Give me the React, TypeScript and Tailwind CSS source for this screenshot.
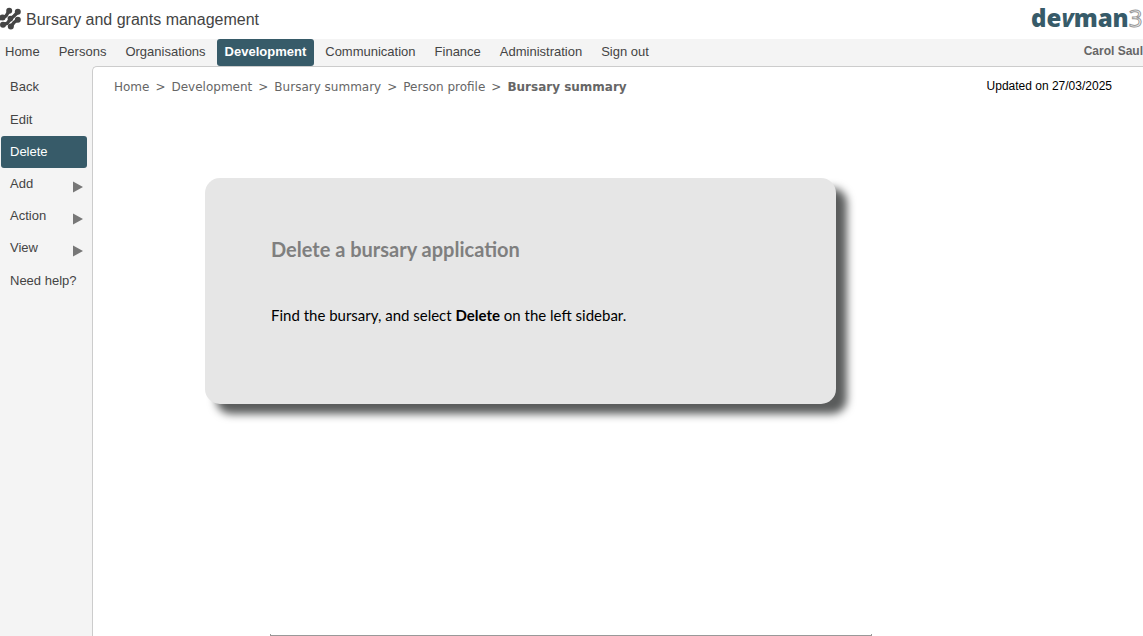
const navItems = [
  'Home',
  'Persons',
  'Organisations',
  'Development',
  'Communication',
  'Finance',
  'Administration',
  'Sign out',
];

const sideItems = [
  { label: 'Back' },
  { label: 'Edit' },
  { label: 'Delete', active: true },
  { label: 'Add', menu: true },
  { label: 'Action', menu: true },
  { label: 'View', menu: true },
  { label: 'Need help?' },
];

const crumbs = ['Home', 'Development', 'Bursary summary', 'Person profile'];

function BrandMark() {
  return (
    <svg width="22" height="24" viewBox="0 0 22 24" aria-hidden="true" className="-mt-1 shrink-0">
      <g stroke="#444" strokeWidth="3.4" fill="none">
        <path d="M-1 13 L3 11.5 L6 10 L9 5" />
        <path d="M3 18.5 L7 17.5 L11 12.5 L14 10 L18 6" />
        <path d="M11 20.5 L14 16.5 L18 13.5" />
      </g>
      <g fill="#444">
        <circle cx="9.2" cy="4.8" r="3" />
        <circle cx="2.6" cy="11.4" r="3" />
        <circle cx="17.8" cy="5.8" r="3" />
        <circle cx="10.4" cy="12.6" r="2.8" />
        <circle cx="3" cy="18.8" r="3" />
        <circle cx="17.8" cy="13.8" r="3" />
        <circle cx="10.8" cy="20.6" r="3" />
      </g>
    </svg>
  );
}

function DevmanLogo() {
  return (
    <a
      href="#devman"
      aria-label="devman3"
      className="block h-9 w-28 shrink-0 overflow-hidden whitespace-nowrap font-['Open_Sans',sans-serif] text-2xl leading-8 font-extrabold text-[#375b69]"
    >
      de<span className="text-xl italic">V</span>man
      <span className="font-normal text-white [-webkit-text-stroke:1px_#999]">3</span>
    </a>
  );
}

export default function App() {
  return (
    <div className="flex min-h-screen flex-col overflow-hidden bg-[#f4f4f4] font-['Liberation_Sans',Arial,sans-serif] text-[13px] text-[#444]">
      <header className="flex h-[39px] items-center justify-between bg-white">
        <div className="flex items-center gap-1">
          <BrandMark />
          <h1 className="text-base">Bursary and grants management</h1>
        </div>
        <DevmanLogo />
      </header>

      <div className="flex h-[27px] items-stretch justify-between">
        <nav aria-label="Main" className="flex gap-[19px] pl-[5px]">
          {navItems.map((item) => (
            <a
              key={item}
              href={'#' + item}
              className={
                item === 'Development'
                  ? '-mx-2 flex items-center rounded-[3px] bg-[#375b69] px-2 pb-[2px] font-bold text-white'
                  : 'flex items-center pb-[2px]'
              }
            >
              {item}
            </a>
          ))}
        </nav>
        <span className="flex items-center pb-1 text-xs font-bold text-[#666]">Carol Saul</span>
      </div>

      <div className="flex flex-1">
        <nav aria-label="Page" className="flex w-[92px] shrink-0 flex-col pl-px pr-[5px] pt-1">
          {sideItems.map(({ label, active, menu }) => (
            <button
              key={label}
              type="button"
              className={
                active
                  ? 'flex h-8 items-center justify-between rounded-[3px] bg-[#375b69] px-[9px] text-left text-white'
                  : menu
                    ? 'flex h-8 items-center justify-between whitespace-nowrap pl-[9px] pr-1 text-left'
                    : 'flex h-[33px] items-center whitespace-nowrap pl-[9px] text-left'
              }
            >
              {label}
              {menu && (
                <svg width="10" height="12" viewBox="0 0 10 12" aria-hidden="true" className="mt-1.5">
                  <path d="M0 0.5 L10 6 L0 11.5 Z" fill="#777" />
                </svg>
              )}
            </button>
          ))}
        </nav>

        <main className="flex min-w-0 flex-1 flex-col rounded-tl-[5px] border-l border-t border-[#ccc] bg-white">
          <div className="flex items-start justify-between pl-[21px] pr-[31px] pt-[11px]">
            <nav
              aria-label="Breadcrumb"
              className="flex gap-1.5 pt-px font-['DejaVu_Sans',Verdana,sans-serif] text-xs leading-4 text-[#666]"
            >
              {crumbs.map((crumb, i) => (
                <span key={i} className="flex gap-1.5">
                  <a href={'#crumb-' + i}>{crumb}</a>
                  <span>&gt;</span>
                </span>
              ))}
              <span className="font-bold">Bursary summary</span>
            </nav>
            <p className="text-xs text-black">Updated on 27/03/2025</p>
          </div>

          <section className="ml-28 mt-[83px] w-full max-w-[631px] rounded-[15px] bg-[#e6e6e6] px-[66px] pb-[77px] pt-[57px] font-['Lato',Calibri,sans-serif] text-black shadow-[11px_10px_9px_#5a5c5c]">
            <h2 className="text-xl leading-7 font-bold text-[#7f7f7f]">Delete a bursary application</h2>
            <p className="mt-10 text-[15px] leading-6">
              Find the bursary, and select <b>Delete</b> on the left sidebar.
            </p>
          </section>

          <div className="ml-[177px] mt-auto h-[2px] w-full max-w-[602px] border-x border-b border-[#999]" />
        </main>
      </div>
    </div>
  );
}
